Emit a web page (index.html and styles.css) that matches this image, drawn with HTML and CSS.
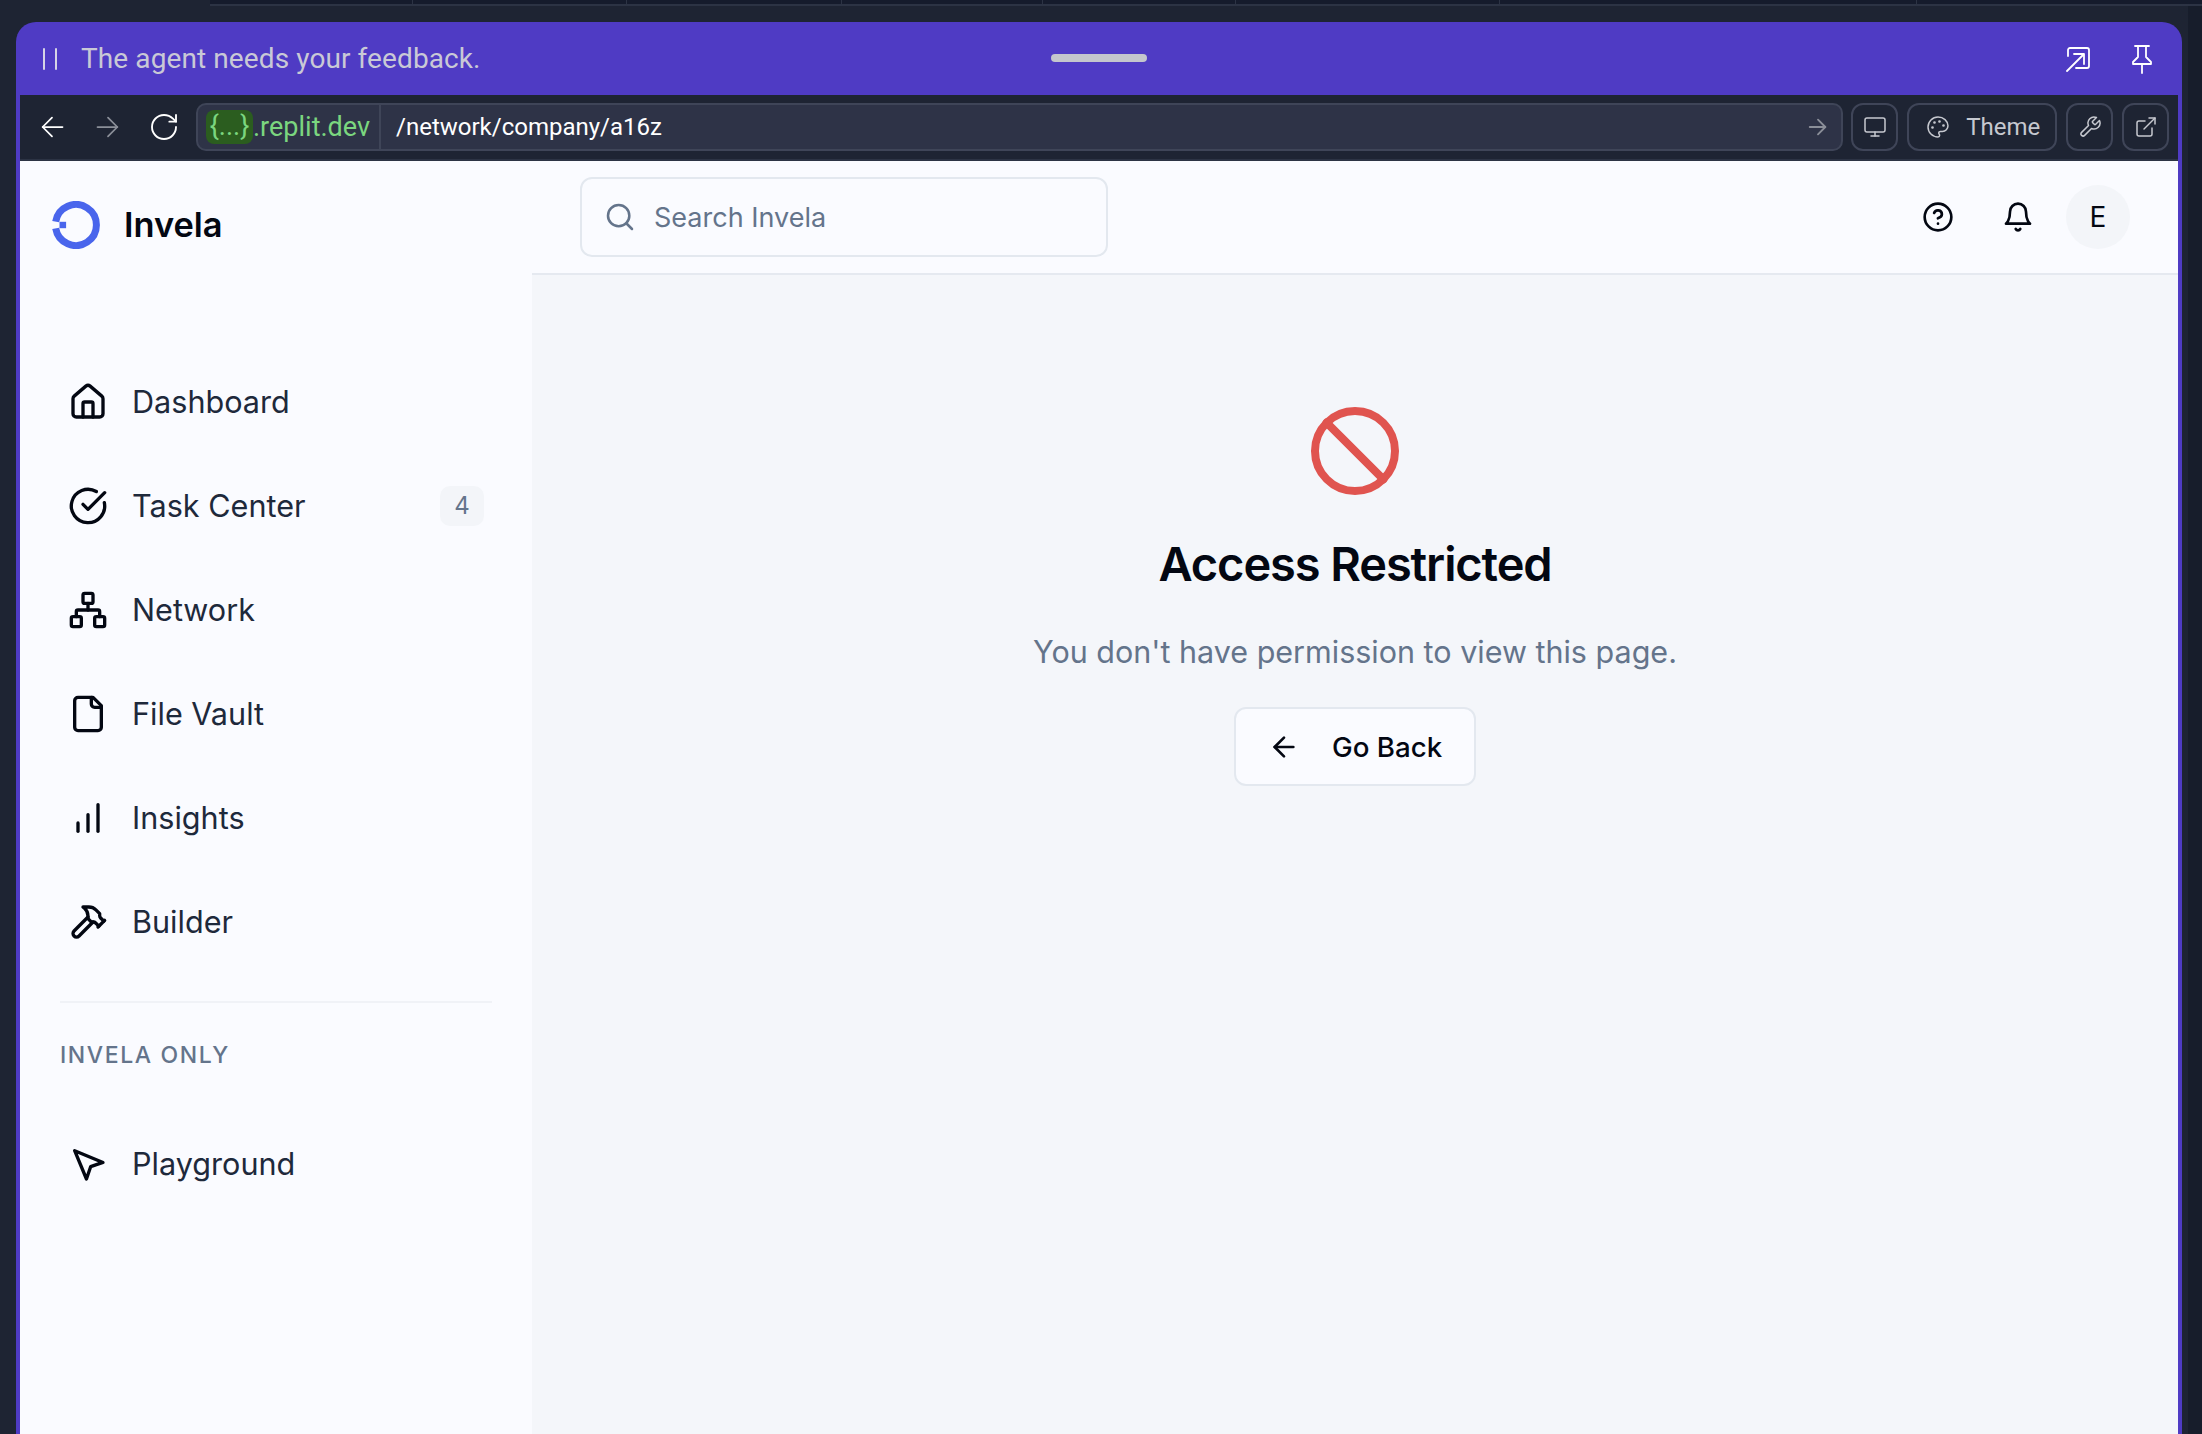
FILE: index.html
```html
<!DOCTYPE html>
<html lang="en">
<head>
    <meta charset="UTF-8">
    <meta name="viewport" content="width=device-width, initial-scale=1.0">
    <title>Invela</title>
    <link rel="stylesheet" href="styles.css">
</head>
<body>
    <div class="top-strip">
        <div class="strip-cell strip-a"></div>
        <div class="strip-cell strip-b"></div>
        <div class="strip-cell strip-c"></div>
        <div class="strip-cell strip-d"></div>
        <div class="strip-cell strip-e"></div>
        <div class="strip-cell strip-f"></div>
        <div class="strip-cell strip-g"></div>
    </div>
    <div class="stage">
        <div class="window">
            <div class="agent-bar">
                <div class="agent-left">
                    <div class="pause"><span></span><span></span></div>
                    <div class="agent-text">The agent needs your feedback.</div>
                </div>
                <div class="drag-handle"></div>
                <div class="agent-right">
                    <svg class="icon expand-icon" viewBox="0 0 26 27"><path d="M3 11V5a2 2 0 0 1 2-2h17a2 2 0 0 1 2 2v16a2 2 0 0 1-2 2H11"/><path d="M2 26 18 10"/><path d="M9 9h10v10"/></svg>
                    <svg class="icon pin-icon" viewBox="0 0 24 30"><path d="M5 2h14"/><path d="M8 2v11l-5 5v2h18v-2l-5-5V2"/><path d="M12 20v9"/></svg>
                </div>
            </div>
            <div class="toolbar">
                <svg class="icon tool-nav" viewBox="0 0 24 24"><path d="m12 20-8-8 8-8"/><path d="M21 12H4"/></svg>
                <svg class="icon tool-nav dim" viewBox="0 0 24 24"><path d="M3 12h17"/><path d="m12 4 8 8-8 8"/></svg>
                <svg class="icon tool-nav reload" viewBox="0 0 24 24"><path d="M21 12a9 9 0 1 1-9-9c2.52 0 4.93 1 6.74 2.74L21 8"/><path d="M21 3v5h-5"/></svg>
                <div class="url-bar">
                    <div class="url-host"><span class="url-id">{...}</span>.replit.dev</div>
                    <div class="url-path">/network/company/a16z</div>
                    <svg class="icon url-go" viewBox="0 0 24 24"><path d="M3 12h17"/><path d="m12 4 8 8-8 8"/></svg>
                </div>
                <div class="tool-btn">
                    <svg class="icon" viewBox="0 0 24 24"><rect x="2" y="3" width="20" height="14" rx="2"/><path d="M8 21h8"/><path d="M12 17v4"/></svg>
                </div>
                <div class="tool-btn theme-btn">
                    <svg class="icon" viewBox="0 0 24 24"><path d="M12 2C6.5 2 2 6.5 2 12s4.5 10 10 10c.926 0 1.648-.746 1.648-1.688 0-.437-.18-.835-.437-1.125-.29-.289-.438-.652-.438-1.125a1.64 1.64 0 0 1 1.668-1.668h1.996c3.051 0 5.555-2.503 5.555-5.554C21.965 6.012 17.461 2 12 2z"/><circle class="dot" cx="13.5" cy="6.5" r=".6"/><circle class="dot" cx="17.5" cy="10.5" r=".6"/><circle class="dot" cx="8.5" cy="7.5" r=".6"/><circle class="dot" cx="6.5" cy="12.5" r=".6"/></svg>
                    <span>Theme</span>
                </div>
                <div class="tool-btn">
                    <svg class="icon" viewBox="0 0 24 24"><path d="M14.7 6.3a1 1 0 0 0 0 1.4l1.6 1.6a1 1 0 0 0 1.4 0l3.77-3.77a6 6 0 0 1-7.94 7.94l-6.91 6.91a2.12 2.12 0 0 1-3-3l6.91-6.91a6 6 0 0 1 7.94-7.94l-3.76 3.76z"/></svg>
                </div>
                <div class="tool-btn">
                    <svg class="icon" viewBox="0 0 24 24"><path d="M15 3h6v6"/><path d="M10 14 21 3"/><path d="M18 13v6a2 2 0 0 1-2 2H5a2 2 0 0 1-2-2V8a2 2 0 0 1 2-2h6"/></svg>
                </div>
            </div>
            <div class="app">
                <aside class="sidebar">
                    <div class="brand">
                        <svg class="logo" viewBox="0 0 48 48"><path d="M3.7 20.6A20.5 20.5 0 1 1 3.7 27.4"/><rect x="7.5" y="20.8" width="6.6" height="6.4"/></svg>
                        <span class="brand-name">Invela</span>
                    </div>
                    <nav class="nav">
                        <a class="nav-item">
                            <svg class="icon" viewBox="0 0 24 24"><path d="M15 21v-8a1 1 0 0 0-1-1h-4a1 1 0 0 0-1 1v8"/><path d="M3 10a2 2 0 0 1 .709-1.528l7-5.999a2 2 0 0 1 2.582 0l7 5.999A2 2 0 0 1 21 10v9a2 2 0 0 1-2 2H5a2 2 0 0 1-2-2z"/></svg>
                            <span class="nav-text">Dashboard</span>
                        </a>
                        <a class="nav-item">
                            <svg class="icon" viewBox="0 0 24 24"><path d="M21.801 10A10 10 0 1 1 17 3.335"/><path d="m9 11 3 3L22 4"/></svg>
                            <span class="nav-text">Task Center</span>
                            <span class="badge">4</span>
                        </a>
                        <a class="nav-item">
                            <svg class="icon" viewBox="0 0 24 24"><rect x="16" y="16" width="6" height="6" rx="1"/><rect x="2" y="16" width="6" height="6" rx="1"/><rect x="9" y="2" width="6" height="6" rx="1"/><path d="M5 16v-3a1 1 0 0 1 1-1h12a1 1 0 0 1 1 1v3"/><path d="M12 12V8"/></svg>
                            <span class="nav-text">Network</span>
                        </a>
                        <a class="nav-item">
                            <svg class="icon" viewBox="0 0 24 24"><path d="M15 2H6a2 2 0 0 0-2 2v16a2 2 0 0 0 2 2h12a2 2 0 0 0 2-2V7Z"/><path d="M14 2v4a2 2 0 0 0 2 2h4"/></svg>
                            <span class="nav-text">File Vault</span>
                        </a>
                        <a class="nav-item">
                            <svg class="icon" viewBox="0 0 24 24"><path d="M6 20v-5"/><path d="M12 20V10"/><path d="M18 20V4"/></svg>
                            <span class="nav-text">Insights</span>
                        </a>
                        <a class="nav-item">
                            <svg class="icon" viewBox="0 0 24 24"><path d="m15 12-8.373 8.373a1 1 0 1 1-3-3L12 9"/><path d="m18 15 4-4"/><path d="m21.5 11.5-1.914-1.914A2 2 0 0 1 19 8.172V7l-2.26-2.26a6 6 0 0 0-4.202-1.756L9 2.96l.92.82A6.18 6.18 0 0 1 12 8.4V10l2 2h1.172a2 2 0 0 1 1.414.586L18.5 14.5"/></svg>
                            <span class="nav-text">Builder</span>
                        </a>
                    </nav>
                    <div class="side-divider"></div>
                    <div class="side-label">INVELA ONLY</div>
                    <nav class="nav">
                        <a class="nav-item">
                            <svg class="icon" viewBox="0 0 24 24"><path d="m4 4 7.07 17 2.51-7.39L21 11.07z"/></svg>
                            <span class="nav-text">Playground</span>
                        </a>
                    </nav>
                </aside>
                <div class="content">
                    <header class="header">
                        <div class="search">
                            <svg class="icon" viewBox="0 0 24 24"><circle cx="11" cy="11" r="8"/><path d="m21 21-4.3-4.3"/></svg>
                            <span>Search Invela</span>
                        </div>
                        <div class="header-right">
                            <svg class="icon" viewBox="0 0 24 24"><circle cx="12" cy="12" r="10"/><path d="M9.09 9a3 3 0 0 1 5.83 1c0 2-3 3-3 3"/><path d="M12 17h.01"/></svg>
                            <svg class="icon" viewBox="0 0 24 24"><path d="M6 8a6 6 0 0 1 12 0c0 7 3 9 3 9H3s3-2 3-9"/><path d="M10.3 21a1.94 1.94 0 0 0 3.4 0"/></svg>
                            <div class="avatar">E</div>
                        </div>
                    </header>
                    <main class="main">
                        <svg class="icon ban-icon" viewBox="0 0 24 24"><circle cx="12" cy="12" r="10"/><path d="m4.9 4.9 14.2 14.2"/></svg>
                        <h1>Access Restricted</h1>
                        <p>You don't have permission to view this page.</p>
                        <button class="back-btn">
                            <svg class="icon" viewBox="0 0 24 24"><path d="m12 19-7-7 7-7"/><path d="M19 12H5"/></svg>
                            <span>Go Back</span>
                        </button>
                    </main>
                </div>
            </div>
        </div>
        <div class="stage-edge"></div>
    </div>
</body>
</html>
```

FILE: styles.css
```css
* {
    box-sizing: border-box;
}
html, body {
    height: 100%;
}
body {
    margin: 0;
    background-color: #1e2433;
    font-family: Inter, "Liberation Sans", sans-serif;
    overflow: hidden;
    display: flex;
    flex-direction: column;
}
.icon {
    fill: none;
    stroke: currentColor;
    stroke-width: 2;
    stroke-linecap: round;
    stroke-linejoin: round;
    flex-shrink: 0;
}
.top-strip {
    height: 6px;
    margin-left: 210px;
    display: flex;
    background-color: #151b2c;
    border-bottom: 2px solid #2c3344;
}
.strip-cell {
    border-right: 1px solid #2c3344;
}
.strip-a { width: 203px; }
.strip-b { width: 214px; }
.strip-c { width: 215px; }
.strip-d { width: 201px; }
.strip-e { width: 193px; }
.strip-f { width: 264px; }
.strip-g { width: 417px; }

.stage {
    flex: 1;
    display: flex;
    padding-top: 16px;
    padding-left: 16px;
    min-height: 0;
}
.window {
    width: 2166px;
    display: flex;
    flex-direction: column;
    background-color: #4f3bc4;
    border-radius: 20px 20px 0 0;
    padding: 0 4px;
}
.stage-edge {
    flex: 1;
    margin-left: 6px;
    margin-top: -16px;
    background-color: #171d2b;
}

.agent-bar {
    height: 73px;
    position: relative;
    display: flex;
    align-items: center;
    justify-content: space-between;
    color: #c9c9d6;
}
.agent-left {
    display: flex;
    align-items: center;
    padding-left: 23px;
}
.pause {
    display: flex;
    gap: 10px;
    margin-right: 24px;
}
.pause span {
    width: 2px;
    height: 22px;
    border-radius: 1px;
    background-color: #d6d4e6;
}
.agent-text {
    font-family: Roboto, sans-serif;
    font-size: 28px;
    letter-spacing: 0.1px;
}
.drag-handle {
    position: absolute;
    left: 1031px;
    top: 32px;
    width: 96px;
    height: 8px;
    border-radius: 4px;
    background-color: #c4c6cd;
}
.agent-right {
    display: flex;
    align-items: center;
    gap: 39px;
    padding-right: 24px;
    color: #fff;
}
.expand-icon {
    width: 26px;
    height: 27px;
    stroke-width: 1.8;
}
.pin-icon {
    width: 24px;
    height: 30px;
    stroke-width: 1.8;
}

.toolbar {
    height: 66px;
    display: flex;
    align-items: center;
    padding: 0 9px 0 18px;
    background-color: #1e2433;
    border-bottom: 2px solid #2c3344;
    color: #c6c8cf;
    font-family: Roboto, sans-serif;
}
.tool-nav {
    width: 28px;
    height: 28px;
    margin-right: 28px;
    color: #fff;
    stroke-width: 1.5;
}
.tool-nav.dim {
    color: #8b8f99;
}
.tool-nav.reload {
    width: 32px;
    height: 32px;
    margin-right: 16px;
    margin-left: -2px;
    stroke-width: 1.4;
}
.url-bar {
    width: 1649px;
    height: 48px;
    display: flex;
    align-items: center;
    background-color: #2e3347;
    border: 2px solid #3f4558;
    border-radius: 10px;
    margin-right: 8px;
}
.url-host {
    height: 100%;
    width: 183px;
    display: flex;
    align-items: center;
    padding-left: 8px;
    border-right: 2px solid #3f4558;
    color: #7bd67f;
    font-size: 27px;
}
.url-id {
    height: 34px;
    line-height: 33px;
    width: 47px;
    text-align: center;
    border-radius: 8px;
    background-color: #2b5d1f;
}
.url-path {
    flex: 1;
    padding-left: 15px;
    color: #fff;
    font-size: 24px;
}
.url-go {
    width: 22px;
    height: 22px;
    margin-right: 12px;
    color: #8b8f99;
}
.tool-btn {
    width: 47px;
    height: 48px;
    margin-right: 9px;
    display: flex;
    align-items: center;
    justify-content: center;
    border: 2px solid #3f4558;
    border-radius: 12px;
    font-size: 24px;
}
.tool-btn:last-child {
    margin-right: 0;
}
.tool-btn .icon {
    width: 24px;
    height: 24px;
    stroke-width: 1.5;
}
.tool-btn .dot {
    fill: currentColor;
}
.theme-btn {
    width: 150px;
    justify-content: flex-start;
    padding-left: 17px;
    gap: 16px;
}

.app {
    flex: 1;
    min-height: 0;
    display: flex;
}
.sidebar {
    width: 512px;
    background-color: #fafbff;
}
.brand {
    height: 189px;
    padding: 40px 0 0 32px;
    display: flex;
    align-items: flex-start;
    gap: 24px;
}
.logo {
    width: 48px;
    height: 48px;
    fill: none;
    stroke: #4965ec;
    stroke-width: 7;
}
.logo rect {
    fill: #4965ec;
    stroke: none;
}
.brand-name {
    font-size: 34.4px;
    line-height: 48px;
    font-weight: 600;
    color: #030712;
}
.nav-item {
    height: 104px;
    display: flex;
    align-items: center;
    gap: 24px;
    padding: 0 48px;
    font-size: 30.6px;
    color: #1e293b;
}
.nav-item .icon {
    width: 40px;
    height: 40px;
    color: #030712;
}
.nav-text {
    padding-bottom: 2px;
}
.badge {
    margin-left: auto;
    width: 44px;
    height: 40px;
    line-height: 40px;
    text-align: center;
    border-radius: 10px;
    background-color: #f3f5f9;
    color: #64748b;
    font-size: 24px;
}
.side-divider {
    height: 2px;
    margin: 27px 40px 0;
    background-color: #f0f2f7;
}
.side-label {
    margin: 36px 0 0 40px;
    height: 32px;
    line-height: 32px;
    font-size: 23px;
    font-weight: 500;
    letter-spacing: 1.6px;
    color: #64748b;
}
.side-label + .nav {
    margin-top: 41px;
}

.content {
    flex: 1;
    display: flex;
    flex-direction: column;
    background-color: #f4f6fa;
}
.header {
    height: 114px;
    display: flex;
    align-items: center;
    justify-content: space-between;
    padding: 0 48px;
    background-color: #fafbff;
    border-bottom: 2px solid #e5e9f0;
}
.search {
    width: 528px;
    height: 80px;
    display: flex;
    align-items: center;
    gap: 18px;
    padding-left: 22px;
    border: 2px solid #e3e8ef;
    border-radius: 12px;
    color: #64748b;
    font-size: 27px;
}
.search .icon {
    width: 32px;
    height: 32px;
    stroke-width: 1.9;
}
.header-right {
    display: flex;
    align-items: center;
    color: #030712;
    gap: 48px;
}
.header-right .icon {
    width: 32px;
    height: 32px;
}
.avatar {
    width: 64px;
    height: 64px;
    margin-left: -16px;
    border-radius: 50%;
    background-color: #f3f5f9;
    display: flex;
    align-items: center;
    justify-content: center;
    font-size: 28px;
}
.main {
    flex: 1;
    display: flex;
    flex-direction: column;
    align-items: center;
    padding-top: 128px;
}
.ban-icon {
    width: 96px;
    height: 96px;
    color: #e0544f;
}
.main h1 {
    margin: 33px 0 0;
    font-size: 47px;
    line-height: 64px;
    font-weight: 600;
    letter-spacing: -1.1px;
    color: #030712;
}
.main p {
    margin: 32px 0 0;
    font-size: 30.5px;
    line-height: 48px;
    color: #64748b;
}
.back-btn {
    margin-top: 31px;
    width: 242px;
    height: 79px;
    display: flex;
    align-items: center;
    gap: 32px;
    padding: 0 0 0 32px;
    background-color: #fafbff;
    border: 2px solid #e3e8ef;
    border-radius: 12px;
    font-family: inherit;
    font-size: 27.7px;
    font-weight: 500;
    color: #030712;
}
.back-btn .icon {
    width: 32px;
    height: 32px;
    stroke-width: 2;
}
```
